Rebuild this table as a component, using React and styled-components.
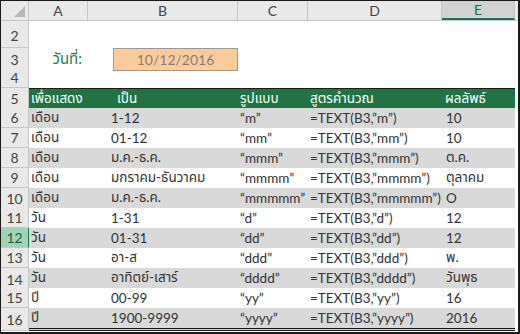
import React from 'react';
import styled, { createGlobalStyle } from 'styled-components';

const GlobalStyle = createGlobalStyle`
  html, body {
    margin: 0;
    padding: 0;
    background: #fff;
  }
  body {
    font-family: "Lato", "Liberation Sans", "Noto Sans Thai", "Loma", "Garuda", "Tlwg Typo", sans-serif;
  }
`;

const COLS = '28px 59px 150px 70px 134px 73px';

const Frame = styled.div`
  width: 520px;
  height: 334px;
  box-sizing: border-box;
  border: 1px solid #1a1a1a;
  border-bottom-width: 2px;
  border-right-width: 2px;
  overflow: hidden;
  background: #fff;
`;

const Row = styled.div`
  display: grid;
  grid-template-columns: ${COLS};
  height: ${(p) => p.$h || 20}px;
  box-sizing: border-box;
`;

const HeadRow = styled(Row)`
  height: 20px;
  background: #e9e9e9;
  border-bottom: 1px solid #c6c6c6;
`;

const Corner = styled.div`
  position: relative;
  border-right: 1px solid #c6c6c6;
  &::after {
    content: '';
    position: absolute;
    right: 3px;
    bottom: 3px;
    width: 0;
    height: 0;
    border-left: 11px solid transparent;
    border-bottom: 11px solid #b8b8b8;
  }
`;

const ColLetter = styled.div`
  display: flex;
  align-items: center;
  justify-content: center;
  font-size: 14px;
  color: ${(p) => (p.$active ? '#1e6b40' : '#444')};
  background: ${(p) => (p.$active ? '#d2d2d2' : 'transparent')};
  border-right: 1px solid #c6c6c6;
  box-sizing: border-box;
  border-bottom: ${(p) => (p.$active ? '2px solid #217346' : 'none')};
`;

const RowNum = styled.div`
  display: flex;
  align-items: ${(p) => (p.$low ? 'flex-end' : 'center')};
  justify-content: center;
  padding-bottom: ${(p) => (p.$low ? '3px' : '0')};
  box-sizing: border-box;
  font-size: 14px;
  color: ${(p) => (p.$active ? '#1e5d3a' : '#444')};
  background: ${(p) => (p.$active ? '#9fd5b7' : '#e9e9e9')};
  border-right: 1px solid ${(p) => (p.$active ? '#217346' : '#c6c6c6')};
  border-bottom: 1px solid #c6c6c6;
`;

const Body = styled.div`
  grid-column: 2 / span 5;
  display: grid;
  grid-template-columns: 59px 150px 70px 134px 73px;
  background: ${(p) => p.$fill || 'transparent'};
  border-top: ${(p) => p.$top || 'none'};
  border-bottom: ${(p) => p.$bottom || 'none'};
  box-sizing: border-box;
`;

const Cell = styled.div`
  display: flex;
  align-items: center;
  padding-left: ${(p) => p.$indent || 2}px;
  font-size: 13.5px;
  color: ${(p) => p.$color || '#333'};
  white-space: nowrap;
  overflow: visible;
`;

const Label = styled.div`
  display: flex;
  align-items: center;
  justify-content: flex-end;
  padding-right: 6px;
  font-size: 15px;
  color: #1f7a4a;
`;

const DateBox = styled.div`
  margin-left: 25px;
  display: flex;
  align-items: center;
  justify-content: center;
  background: #fbcb9d;
  border: 1px solid #9a9a9a;
  box-sizing: border-box;
  font-size: 14px;
  color: #8a7c6e;
`;

const rows = [
  ['เดือน', '1-12', '“m”', '=TEXT(B3,”m”)', '10'],
  ['เดือน', '01-12', '“mm”', '=TEXT(B3,”mm”)', '10'],
  ['เดือน', 'ม.ค.-ธ.ค.', '“mmm”', '=TEXT(B3,”mmm”)', 'ต.ค.'],
  ['เดือน', 'มกราคม-ธันวาคม', '“mmmm”', '=TEXT(B3,”mmmm”)', 'ตุลาคม'],
  ['เดือน', 'ม.ค.-ธ.ค.', '“mmmmm”', '=TEXT(B3,”mmmmm”)', 'O'],
  ['วัน', '1-31', '“d”', '=TEXT(B3,”d”)', '12'],
  ['วัน', '01-31', '“dd”', '=TEXT(B3,”dd”)', '12'],
  ['วัน', 'อา-ส', '“ddd”', '=TEXT(B3,”ddd”)', 'พ.'],
  ['วัน', 'อาทิตย์-เสาร์', '“dddd”', '=TEXT(B3,”dddd”)', 'วันพุธ'],
  ['ปี', '00-99', '“yy”', '=TEXT(B3,”yy”)', '16'],
  ['ปี', '1900-9999', '“yyyy”', '=TEXT(B3,”yyyy”)', '2016'],
];

const bottoms = {
  10: '2px solid #111',
  14: '3px double #111',
  16: '3px double #111',
};

const App = () => {
  return (
    <Frame>
      <GlobalStyle />
      <HeadRow>
        <Corner />
        <ColLetter>A</ColLetter>
        <ColLetter>B</ColLetter>
        <ColLetter>C</ColLetter>
        <ColLetter>D</ColLetter>
        <ColLetter $active>E</ColLetter>
      </HeadRow>

      <Row $h={27}>
        <RowNum $low>2</RowNum>
        <Body />
      </Row>
      <Row>
        <RowNum>3</RowNum>
        <Body>
          <Label>วันที่:</Label>
          <DateBox>10/12/2016</DateBox>
        </Body>
      </Row>
      <Row>
        <RowNum>4</RowNum>
        <Body />
      </Row>
      <Row>
        <RowNum>5</RowNum>
        <Body $fill="#217346" $top="1px solid #1a1a1a">
          <Cell $color="#fff">เพื่อแสดง</Cell>
          <Cell $color="#fff" $indent={29}>เป็น</Cell>
          <Cell $color="#fff">รูปแบบ</Cell>
          <Cell $color="#fff">สูตรคำนวณ</Cell>
          <Cell $color="#fff" $indent={3}>ผลลัพธ์</Cell>
        </Body>
      </Row>

      {rows.map((r, i) => {
        const n = i + 6;
        return (
          <Row key={n}>
            <RowNum $active={n === 12}>{n}</RowNum>
            <Body $fill={n % 2 === 0 ? '#d9d9d9' : '#fff'} $bottom={bottoms[n]}>
              <Cell>{r[0]}</Cell>
              <Cell $indent={23}>{r[1]}</Cell>
              <Cell>{r[2]}</Cell>
              <Cell>{r[3]}</Cell>
              <Cell $indent={4}>{r[4]}</Cell>
            </Body>
          </Row>
        );
      })}
    </Frame>
  );
};

export default App;
